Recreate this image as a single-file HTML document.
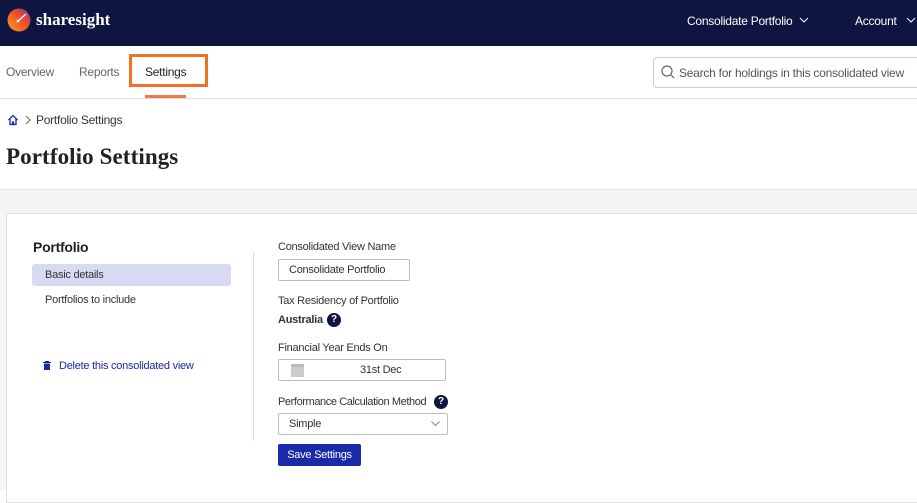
<!DOCTYPE html>
<html><head><style>
*{box-sizing:border-box;margin:0;padding:0}
body{width:917px;height:490px;overflow:hidden;font-family:"Liberation Sans",sans-serif;background:#fff;color:#222;position:relative}
.abs{position:absolute}
.hdr{left:0;top:0;width:917px;height:46px;background:#0d1540}
.t{position:absolute;white-space:nowrap;letter-spacing:-0.25px}
</style></head><body>
<div class="abs hdr"></div>
<svg class="abs" style="left:7px;top:8px" width="24" height="24" viewBox="0 0 24 24"><defs><linearGradient id="g" x1="0" y1="1" x2="1" y2="0"><stop offset="0" stop-color="#f7a21b"/><stop offset=".6" stop-color="#ee4a2e"/><stop offset="1" stop-color="#7a3a9e"/></linearGradient></defs><circle cx="12" cy="12" r="11.5" fill="url(#g)"/><path d="M11 13 L19 6" stroke="#fff" stroke-width="1.2"/><circle cx="11" cy="13" r="1.4" fill="#fff"/></svg>
<div class="t" style="left:36px;top:10px;color:#fff;font-family:'Liberation Serif',serif;font-weight:bold;font-size:17px;letter-spacing:0">sharesight</div>
<div class="t" style="left:687px;top:14px;color:#fff;font-size:12px">Consolidate Portfolio</div>
<svg class="abs" style="left:799px;top:17px" width="10" height="7"><path d="M1 1l4 4 4-4" stroke="#fff" fill="none"/></svg>
<div class="t" style="left:855px;top:14px;color:#fff;font-size:12px">Account</div>
<svg class="abs" style="left:906px;top:17px" width="10" height="7"><path d="M1 1l4 4 4-4" stroke="#fff" fill="none"/></svg>

<div class="t" style="left:6px;top:65px;font-size:12px;color:#666">Overview</div>
<div class="t" style="left:79px;top:65px;font-size:12px;color:#666">Reports</div>
<div class="t" style="left:145px;top:65px;font-size:12px;color:#222">Settings</div>
<div class="abs" style="left:129px;top:54px;width:79px;height:33px;border:3px solid #f36f21"></div>
<div class="abs" style="left:145px;top:95px;width:41px;height:3px;background:#f07a4a"></div>
<div class="abs" style="left:0;top:98px;width:917px;height:1px;background:#ddd"></div>
<div class="abs" style="left:653px;top:57px;width:270px;height:31px;border:1px solid #ccc;border-radius:4px"></div>
<svg class="abs" style="left:661px;top:65px" width="14" height="14"><circle cx="6" cy="6" r="5" stroke="#666" fill="none" stroke-width="1.2"/><path d="M10 10l3 3" stroke="#666" stroke-width="1.2"/></svg>
<div class="t" style="left:679px;top:66px;font-size:12px;color:#555">Search for holdings in this consolidated view</div>

<svg class="abs" style="left:7px;top:114px" width="12" height="12"><path d="M1.5 6L6 1.5 10.5 6M3 5v5.5h2.5V8h1v2.5H9V5" stroke="#1b2aa8" fill="none" stroke-width="1.3"/></svg>
<svg class="abs" style="left:24px;top:115px" width="8" height="10"><path d="M2 1l4 4-4 4" stroke="#666" fill="none"/></svg>
<div class="t" style="left:36px;top:113px;font-size:12px;color:#333">Portfolio Settings</div>
<div class="t" style="left:6px;top:144px;font-family:'Liberation Serif',serif;font-weight:bold;font-size:23px;color:#222;letter-spacing:0.1px">Portfolio Settings</div>

<div class="abs" style="left:0;top:189px;width:917px;height:301px;background:#f5f5f7;border-top:1px solid #e4e4e8"></div>
<div class="abs" style="left:6px;top:213px;width:920px;height:290px;background:#fff;border:1px solid #e2e2e6"></div>

<div class="t" style="left:33px;top:239px;font-size:14px;font-weight:bold;color:#222">Portfolio</div>
<div class="abs" style="left:32px;top:264px;width:199px;height:22px;background:#d8d9f3;border-radius:3px"></div>
<div class="t" style="left:45px;top:269px;font-size:11px;color:#333">Basic details</div>
<div class="t" style="left:45px;top:294px;font-size:11px;color:#333">Portfolios to include</div>
<svg class="abs" style="left:43px;top:361px" width="8" height="9"><path d="M0 1.5h8M2.5 1V0h3v1" stroke="#1b2aa8"/><rect x="1" y="2.5" width="6" height="6.5" fill="#1b2aa8"/></svg>
<div class="t" style="left:59px;top:360px;font-size:11px;color:#1b2aa8">Delete this consolidated view</div>
<div class="abs" style="left:253px;top:252px;width:1px;height:189px;background:#ddd"></div>

<div class="t" style="left:278px;top:241px;font-size:11px;color:#333">Consolidated View Name</div>
<div class="abs" style="left:278px;top:259px;width:132px;height:22px;border:1px solid #bbb;border-radius:2px"></div>
<div class="t" style="left:289px;top:264px;font-size:11px;color:#333">Consolidate Portfolio</div>
<div class="t" style="left:278px;top:295px;font-size:11px;color:#333">Tax Residency of Portfolio</div>
<div class="t" style="left:278px;top:314px;font-size:11px;font-weight:bold;color:#333">Australia</div>
<div class="abs" style="left:327px;top:313px;width:14px;height:14px;border-radius:50%;background:#0d1540;color:#fff;font-size:10px;font-weight:bold;text-align:center;line-height:14px">?</div>
<div class="t" style="left:278px;top:342px;font-size:11px;color:#333">Financial Year Ends On</div>
<div class="abs" style="left:278px;top:359px;width:168px;height:22px;border:1px solid #bbb;border-radius:2px"></div>
<div class="abs" style="left:291px;top:364px;width:13px;height:13px;background:#ccc;border-top:3px solid #bbb"></div>
<div class="t" style="left:360px;top:364px;font-size:11px;color:#333">31st Dec</div>
<div class="t" style="left:278px;top:396px;font-size:11px;color:#333;letter-spacing:-0.4px">Performance Calculation Method</div>
<div class="abs" style="left:434px;top:395px;width:14px;height:14px;border-radius:50%;background:#0d1540;color:#fff;font-size:10px;font-weight:bold;text-align:center;line-height:14px">?</div>
<div class="abs" style="left:278px;top:413px;width:170px;height:22px;border:1px solid #bbb;border-radius:2px"></div>
<div class="t" style="left:289px;top:418px;font-size:11px;color:#333">Simple</div>
<svg class="abs" style="left:431px;top:421px" width="9" height="6"><path d="M.5 .5l4 4 4-4" stroke="#888" fill="none"/></svg>
<div class="abs" style="left:278px;top:444px;width:83px;height:22px;background:#1b2aa8;border-radius:2px;color:#fff;font-size:11px;text-align:center;line-height:22px;letter-spacing:-0.25px">Save Settings</div>
</body></html>
